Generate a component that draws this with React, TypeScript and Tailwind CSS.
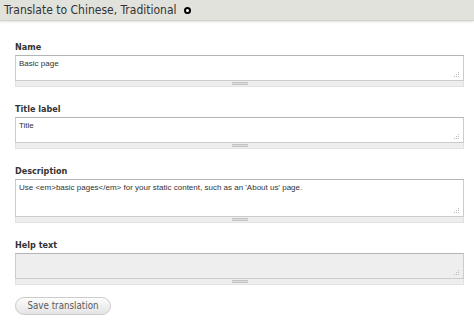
import React from 'react'

const cond = { fontFamily: '"DejaVu Sans Condensed", "DejaVu Sans", Verdana, sans-serif' }
const arial = { fontFamily: '"Liberation Sans", Arial, sans-serif' }

function Grip() {
  return (
    <svg width="6" height="6" viewBox="0 0 6 6" className="absolute bottom-[2px] right-[3px]">
      <rect x="4" y="0" width="1" height="1" fill="#bbb" />
      <rect x="4" y="2" width="1" height="1" fill="#bbb" />
      <rect x="2" y="2" width="1" height="1" fill="#bbb" />
      <rect x="4" y="4" width="1" height="1" fill="#bbb" />
      <rect x="2" y="4" width="1" height="1" fill="#bbb" />
      <rect x="0" y="4" width="1" height="1" fill="#bbb" />
    </svg>
  )
}

function Field({
  label,
  value,
  height,
  disabled,
}: {
  label: string
  value: string
  height: string
  disabled?: boolean
}) {
  return (
    <div className="mb-[17px]">
      <label className="mb-[2px] block text-[9px] font-bold leading-[11px] text-[#333]" style={cond}>
        {label}
      </label>
      <div
        className={`relative ${height} border border-[#ccc] border-t-[#b4b4b4] px-[3px] py-[3px] text-[8px] leading-[10px] text-[#333] ${
          disabled ? 'bg-[#eee]' : 'bg-white'
        }`}
        style={arial}
      >
        {value}
        <Grip />
      </div>
      <div className="flex h-[6px] items-center justify-center border border-t-0 border-[#e2e2e2] bg-[#eee]">
        <div className="h-[3px] w-[16px] border-y border-[#c4c4c4] bg-[#dcdcdc]" />
      </div>
    </div>
  )
}

export default function App() {
  return (
    <div className="h-[327px] w-[474px] bg-white">
      <div className="flex h-[21px] items-center gap-[7px] border-b border-[#d4d4cc] bg-[#e1e2dc] px-[4px] shadow-[0_1px_2px_rgba(0,0,0,0.12)]">
        <h1 className="text-[12px] font-normal leading-[16px] text-[#333]" style={cond}>
          Translate to Chinese, Traditional
        </h1>
        <span className="mt-[1px] inline-block h-[7px] w-[7px] rounded-full border-2 border-black bg-white" />
      </div>
      <div className="pl-[15px] pr-[10px] pt-[21px]">
        <Field label="Name" value="Basic page" height="h-[26px]" />
        <Field label="Title label" value="Title" height="h-[26px]" />
        <Field
          label="Description"
          value="Use <em>basic pages</em> for your static content, such as an 'About us' page."
          height="h-[38px]"
        />
        <Field label="Help text" value="" height="h-[26px]" disabled />
        <div className="-mt-[5px] flex">
          <button
            type="button"
            className="h-[18px] w-[96px] rounded-full border border-[#ccc] bg-gradient-to-b from-[#fcfcfc] to-[#e4e4e4] text-[9.7px] leading-[16px] text-[#5a5a5a]"
            style={cond}
          >
            Save translation
          </button>
        </div>
      </div>
    </div>
  )
}
